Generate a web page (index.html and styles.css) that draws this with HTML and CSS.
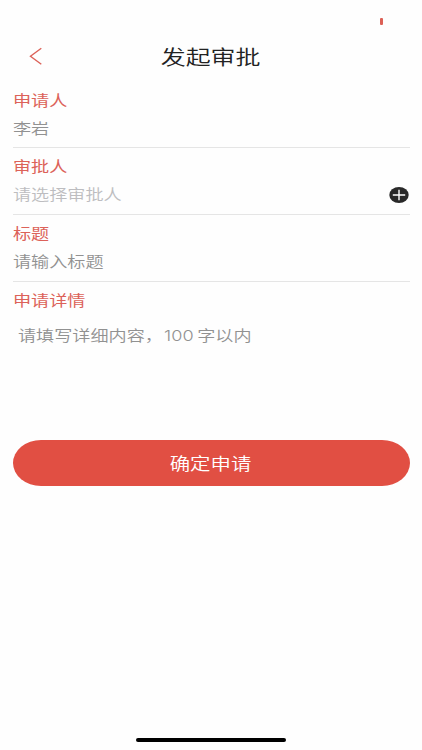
FILE: index.html
```html
<!DOCTYPE html>
<html lang="zh-CN">
<head>
<meta charset="utf-8">
<meta name="viewport" content="width=device-width">
<title>发起审批</title>
<link rel="stylesheet" href="styles.css">
</head>
<body>
<main class="screen">
  <div class="status"><i class="battery"></i></div>
  <header class="header">
    <svg class="back" width="16" height="20" viewBox="0 0 16 20"><path d="M13.3 2.3 2.5 10.3 13.3 18.2"/></svg>
    <h1 class="title"><span class="wide">发起审批</span></h1>
  </header>
  <form class="form">
    <section class="field">
      <div class="label"><span class="wide">申请人</span></div>
      <div class="value"><span class="wide">李岩</span></div>
    </section>
    <section class="field">
      <div class="label"><span class="wide">审批人</span></div>
      <div class="value placeholder"><span class="wide">请选择审批人</span>
        <svg class="add" width="20" height="16" viewBox="0 0 20 16"><ellipse cx="10" cy="8" rx="9.7" ry="8"/><path d="M3.8 8h12.4M10 2.7v10.6"/></svg>
      </div>
    </section>
    <section class="field">
      <div class="label"><span class="wide">标题</span></div>
      <div class="value"><span class="wide">请输入标题</span></div>
    </section>
    <section class="details">
      <div class="label"><span class="wide">申请详情</span></div>
      <div class="value"><span class="wide">请填写详细内容，<span class="num">100</span>字以内</span></div>
    </section>
    <button class="submit" type="button"><span class="wide">确定申请</span></button>
  </form>
  <div class="home"></div>
</main>
</body>
</html>
```
FILE: styles.css
```css
* { box-sizing: border-box; }
body { margin: 0; background: #fefefe; font-family: "Noto Sans CJK SC", sans-serif; }
.screen { width: 422px; height: 750px; display: flex; flex-direction: column; overflow: hidden; }
.wide { display: inline-block; transform: translateY(-1px) scaleX(1.2); transform-origin: left center; white-space: nowrap; }
.status { height: 36px; flex: none; display: flex; justify-content: flex-end; padding: 18px 39px 0 0; }
.battery { width: 3px; height: 7px; background: #dc6056; border-radius: 1px; }
.header { height: 42px; flex: none; display: grid; grid-template-columns: 60px 1fr 60px; align-items: center; }
.back { margin: -2px 0 0 28px; fill: none; stroke: #dc6259; stroke-width: 1.4; }
.title { margin: 0; font-size: 20.8px; line-height: 42px; font-weight: 350; color: #222; text-align: center; }
.title .wide, .submit .wide { transform-origin: center; }
.submit .wide { transform: translateX(-0.5px) scaleX(1.2); }
.form { padding: 0 12.5px; display: flex; flex-direction: column; }
.field { height: 67px; border-bottom: 1px solid #e5e5e5; }
.field:first-child { height: 70px; padding-top: 4px; }
.label, .value { font-size: 15.1px; height: 28px; line-height: 28px; padding-left: 0.5px; }
.label { color: #dc6259; padding-top: 4px; height: 32px; }
.value { color: #919191; font-weight: 350; display: flex; justify-content: space-between; align-items: center; margin-top: -1px; }
.field .value .wide { transform: translateY(-0.5px) scaleX(1.2); }
.placeholder { color: #bdbdc0; }
.add { margin: 3px 1px 0 0; fill: #292929; }
.add path { stroke: #fff; stroke-width: 1.4; fill: none; }
.details { height: 158px; }
.details .value { margin-top: 8px; padding-left: 5.5px; }
.num { font-family: Inter, sans-serif; font-weight: 300; margin: 0 3px 0 1px; font-size: 15.1px; }
.submit { height: 46px; width: 397px; border: 0; border-radius: 28px / 23px; background: #e14f43; color: #fff; padding: 0; font: 350 17px/46px "Noto Sans CJK SC", sans-serif; }
.home { margin: auto auto 8px 136px; width: 150px; height: 4px; border-radius: 2px; background: #000; }
```
